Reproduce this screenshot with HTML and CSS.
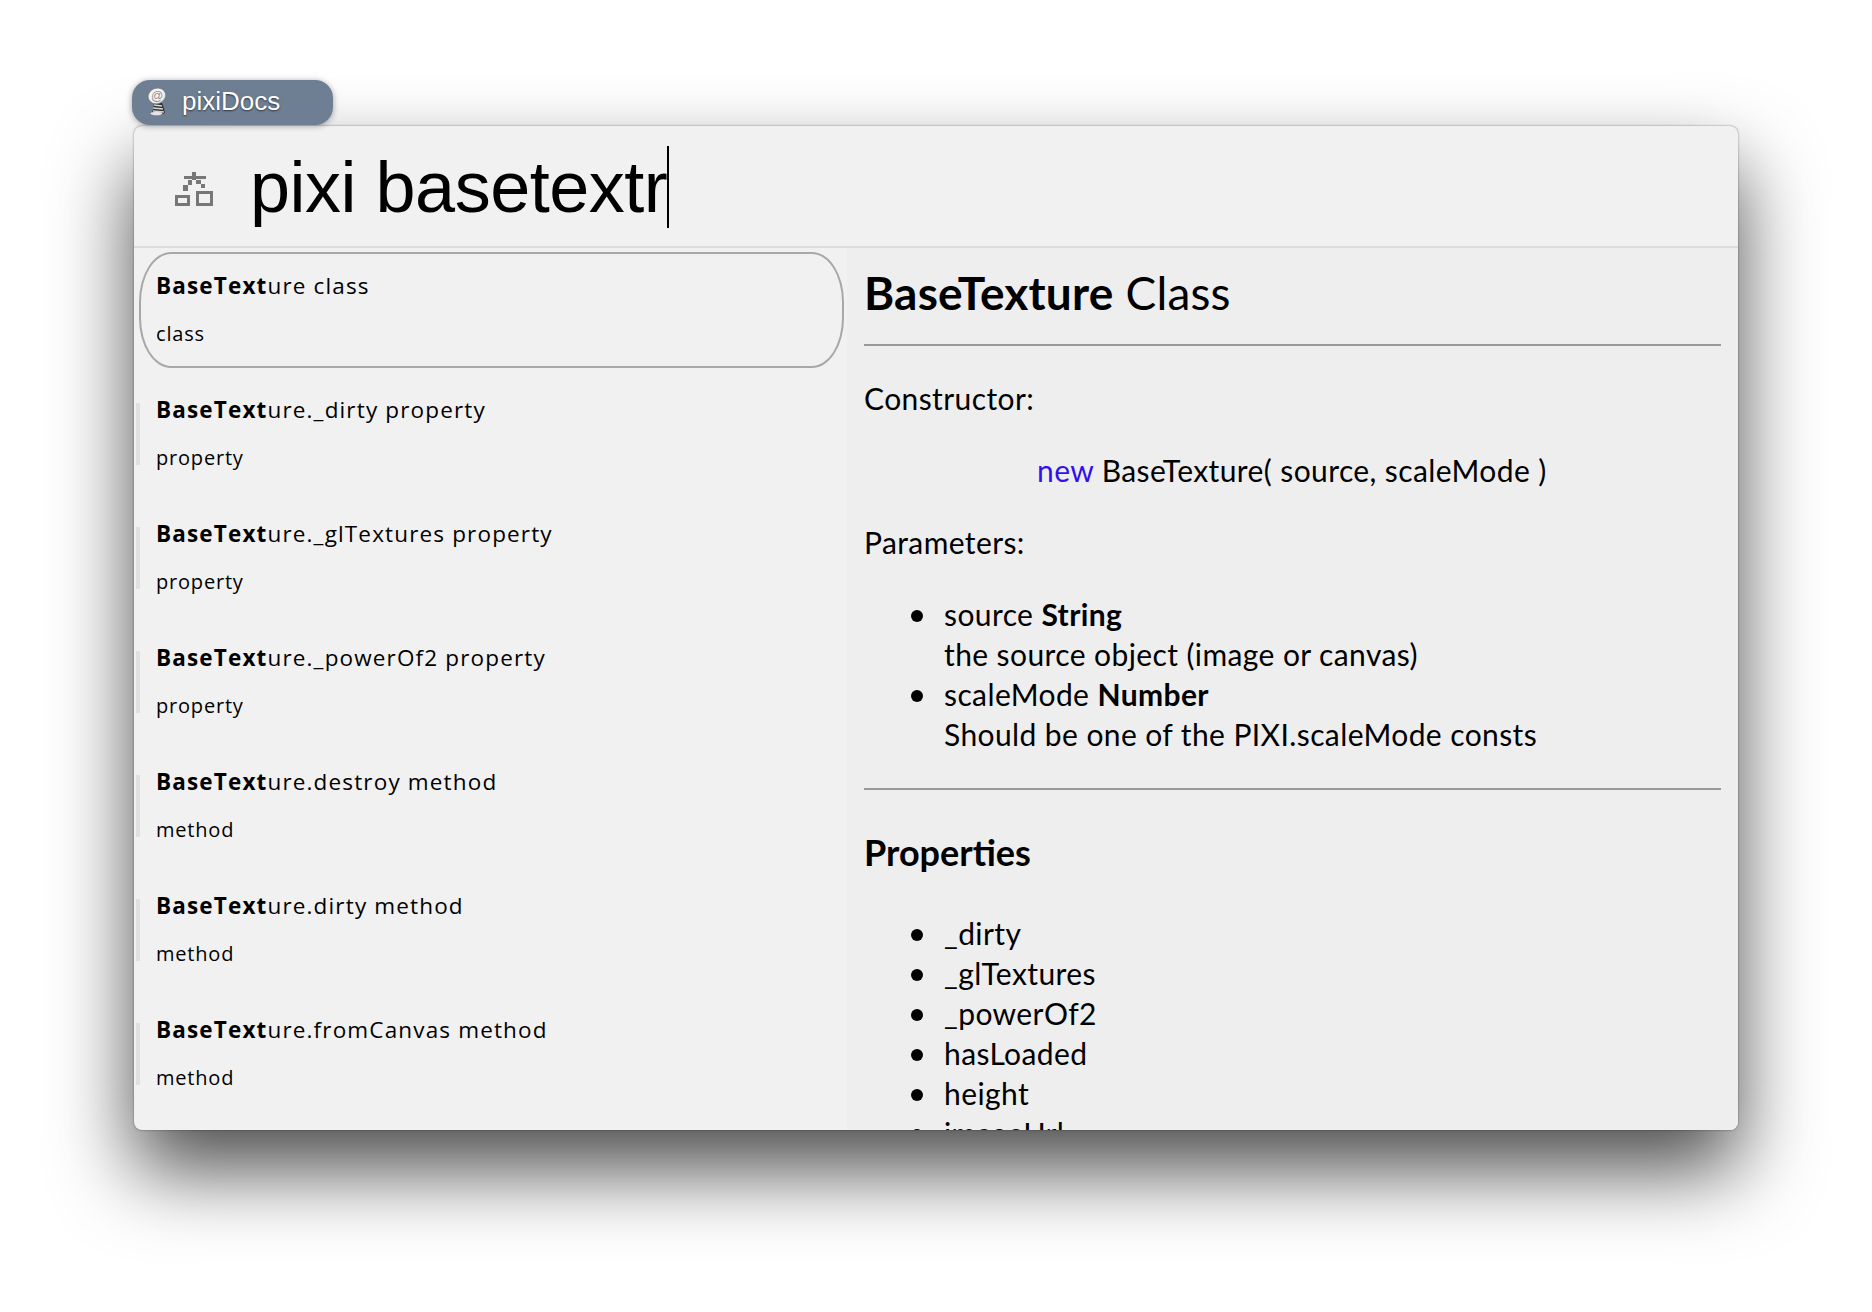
FILE: index.html
```html
<!DOCTYPE html>
<html lang="en">
<head>
  <meta charset="UTF-8" />
  <title>pixiDocs</title>
  <link rel="stylesheet" href="styles.css">
</head>
<body>
  <div class="launcher">
    <div class="tab">
      <svg class="pin" viewBox="0 0 24 32" width="24" height="32">
        <defs>
          <radialGradient id="pinFace" cx="45%" cy="40%" r="65%">
            <stop offset="0" stop-color="#fff"/>
            <stop offset="0.75" stop-color="#eee"/>
            <stop offset="1" stop-color="#a0a0a0"/>
          </radialGradient>
        </defs>
        <path d="M8 17h8l2 5 1 5-4 2h-5l-4-2 1-4z" fill="#333"/>
        <path d="M8 19l8 1M7 22l10 1M7 25l11 1" stroke="#d4d4d4" stroke-width="1.300"/>
        <ellipse cx="10.500" cy="27.500" rx="6" ry="1.800" fill="#e4e4e4"/>
        <ellipse cx="11" cy="10" rx="9" ry="7.800" transform="rotate(-18 11 10)" fill="url(#pinFace)" stroke="#6a6a6a" stroke-width="0.600"/>
        <text class="pin-at" x="11" y="14" text-anchor="middle">@</text>
      </svg>
      <span class="tab-name">pixiDocs</span>
    </div>
    <div class="window">
      <header class="search">
        <svg class="tree" viewBox="0 0 48 44" width="48" height="44">
          <path d="M22 6h4v4h10v3H26v1h5v4h4v4h-4v-4h-5v-4h-4v5h-4v6h-5v-6h5v-5h4v-1h-8v-3h8z" fill="#777"/>
          <rect x="6.500" y="30.500" width="12" height="8" fill="none" stroke="#777" stroke-width="3"/>
          <rect x="27.500" y="26.500" width="14" height="12" fill="none" stroke="#777" stroke-width="3"/>
        </svg>
        <div class="query">pixi basetextr<span class="caret"></span></div>
      </header>
      <div class="panes">
        <ul class="results">
          <li class="result selected">
            <div class="result-name"><b>BaseText</b>ure class</div>
            <div class="result-kind">class</div>
          </li>
          <li class="result">
            <div class="result-name"><b>BaseText</b>ure._dirty property</div>
            <div class="result-kind">property</div>
          </li>
          <li class="result">
            <div class="result-name"><b>BaseText</b>ure._glTextures property</div>
            <div class="result-kind">property</div>
          </li>
          <li class="result">
            <div class="result-name"><b>BaseText</b>ure._powerOf2 property</div>
            <div class="result-kind">property</div>
          </li>
          <li class="result">
            <div class="result-name"><b>BaseText</b>ure.destroy method</div>
            <div class="result-kind">method</div>
          </li>
          <li class="result">
            <div class="result-name"><b>BaseText</b>ure.dirty method</div>
            <div class="result-kind">method</div>
          </li>
          <li class="result">
            <div class="result-name"><b>BaseText</b>ure.fromCanvas method</div>
            <div class="result-kind">method</div>
          </li>
        </ul>
        <article class="doc">
          <h1><b>BaseTexture</b> Class</h1>
          <hr>
          <p>Constructor:</p>
          <p class="signature"><span class="keyword">new</span> BaseTexture( source, scaleMode )</p>
          <p>Parameters:</p>
          <ul class="params">
            <li>source <b>String</b><br>the source object (image or canvas)</li>
            <li>scaleMode <b>Number</b><br>Should be one of the PIXI.scaleMode consts</li>
          </ul>
          <hr>
          <h2>Properties</h2>
          <ul class="props">
            <li>_dirty</li>
            <li>_glTextures</li>
            <li>_powerOf2</li>
            <li>hasLoaded</li>
            <li>height</li>
            <li>imageUrl</li>
          </ul>
        </article>
      </div>
    </div>
  </div>
</body>
</html>
```

FILE: styles.css
```css
html, body {
  margin: 0;
  height: 100%;
  background-color: #fff;
  overflow: hidden;
}

body {
  font-family: "Lato", "Open Sans", sans-serif;
  color: #000;
  padding: 80px 134px 0;
  box-sizing: border-box;
}

.launcher {
  width: 1604px;
}

.tab {
  position: relative;
  z-index: 1;
  display: flex;
  align-items: center;
  width: 201px;
  height: 45px;
  margin-bottom: 1px;
  margin-left: -2px;
  padding-left: 14px;
  padding-bottom: 2px;
  box-sizing: border-box;
  background-color: #6e7f94;
  border-radius: 18px;
  box-shadow: 0 1px 6px rgba(0, 0, 0, 0.35);
}

.pin {
  flex: none;
}

.pin-at {
  font-family: "Liberation Sans", Arial, sans-serif;
  font-size: 12px;
  fill: #8d8d8d;
}

.tab-name {
  margin-left: 12px;
  color: #fff;
  font-family: "Liberation Sans", Arial, sans-serif;
  font-size: 26px;
  text-shadow: 0 1px 2px rgba(0, 0, 0, 0.6);
}

.window {
  position: relative;
  height: 1004px;
  background-color: #f1f1f1;
  border-radius: 8px;
  box-shadow: 0 0 2px rgba(0, 0, 0, 0.5), 0 40px 80px rgba(0, 0, 0, 0.7);
  overflow: hidden;
}

.search {
  display: flex;
  align-items: center;
  height: 122px;
  border-bottom: 2px solid #dcdcdc;
  box-sizing: border-box;
}

.tree {
  margin-left: 36px;
  margin-top: 3px;
  flex: none;
}

.query {
  display: flex;
  align-items: center;
  margin-left: 32px;
  margin-top: 2px;
  font-family: "Liberation Sans", Arial, sans-serif;
  font-size: 72px;
  letter-spacing: -0.5px;
}

.caret {
  width: 2px;
  height: 82px;
  background-color: #000;
}

.panes {
  display: flex;
  height: 882px;
}

.results {
  width: 713px;
  flex: none;
  margin: 0;
  padding: 4px 0 0;
  list-style: none;
  overflow: hidden;
}

.result {
  position: relative;
  height: 116px;
  margin: 0 3px 8px 5px;
  padding: 17px 17px 0;
  box-sizing: border-box;
  font-family: "Open Sans", sans-serif;
}

.result::before {
  content: "";
  position: absolute;
  left: -3px;
  top: 27px;
  width: 4px;
  height: 62px;
  background-color: #e0e0e0;
}

.selected {
  border: 2px solid #a8a8a8;
  border-radius: 32px / 50px;
  padding: 15px 15px 0;
}

.selected::before {
  display: none;
}

.result-name {
  font-size: 22.500px;
  line-height: 34px;
  letter-spacing: 1.150px;
}

.result-kind {
  margin-top: 16px;
  font-size: 20px;
  line-height: 30px;
  letter-spacing: 0.8px;
}

.doc {
  flex: 1;
  min-width: 0;
  padding: 0 17px 0 17px;
  background-color: #eee;
  font-size: 30px;
  line-height: 40px;
  letter-spacing: 0.4px;
  overflow: hidden;
}

.doc h1 {
  margin: 15px 0 0;
  font-size: 46px;
  line-height: 60px;
  font-weight: normal;
  letter-spacing: 0.2px;
}

.doc hr {
  margin: 21px 0 0;
  border: 0;
  border-top: 2px solid #999;
}

.doc p {
  margin: 32px 0 0;
}

.doc .signature {
  padding-left: 173px;
}

.keyword {
  color: #3311ee;
}

.doc ul {
  margin: 32px 0 0;
  padding-left: 80px;
  list-style: none;
}

.doc li {
  position: relative;
}

.doc li::before {
  content: "";
  position: absolute;
  left: -33px;
  top: 16px;
  width: 12px;
  height: 12px;
  border-radius: 50%;
  background-color: #000;
}

.doc .params + hr {
  margin-top: 34px;
}

.doc h2 {
  margin: 39px 0 0;
  font-size: 36px;
  line-height: 46px;
  letter-spacing: 0;
}

.doc .props {
  margin-top: 38px;
}
```
